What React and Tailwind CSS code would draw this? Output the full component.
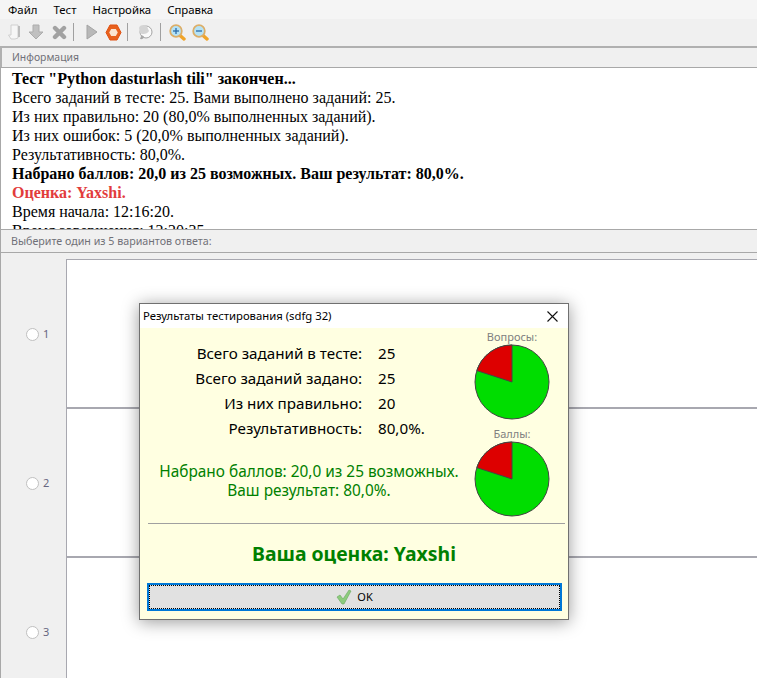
import React from "react";

const sans = "font-['Tahoma','Noto_Sans','DejaVu_Sans',sans-serif]";

function Pie() {
  return (
    <svg width="76" height="76" viewBox="0 0 76 76" className="shrink-0">
      <circle cx="38" cy="38" r="37" fill="#00dd00" stroke="#444" strokeWidth="1" />
      <path d="M38 38 L38 1 A37 37 0 0 0 2.8 26.6 Z" fill="#dd0000" stroke="#444" strokeWidth="1" />
    </svg>
  );
}

function Sep() {
  return <div className="w-px h-[18px] bg-[#a0a0a0] shrink-0" />;
}

function Zoom({ minus }) {
  return (
    <svg width="17" height="17" viewBox="0 0 17 17">
      <path d="M11 11.5 L15 15" stroke="#f0a428" strokeWidth="3.4" strokeLinecap="round" />
      <circle cx="7" cy="7" r="5.8" fill="#b4e2f6" stroke="#dcae68" strokeWidth="1.8" />
      <path d="M4 7 H10" stroke="#2a6aa8" strokeWidth="1.3" />
      {!minus && <path d="M7 4 V10" stroke="#2a6aa8" strokeWidth="1.3" />}
    </svg>
  );
}

function Toolbar() {
  return (
    <div className="h-[26px] flex items-center bg-[#f0f0f0] pl-[7px]">
      {/* disabled door */}
      <svg width="15" height="16" viewBox="0 0 15 16" className="shrink-0">
        <path d="M4 1 H11 V14 L8 15 H4 L1.5 11 H4 Z" fill="#f6f6f6" stroke="#d0d0d0" />
        <path d="M11 2 H13 V13 H11 Z" fill="#bcbcbc" />
      </svg>
      <svg width="16" height="16" viewBox="0 0 16 16" className="ml-[6px] shrink-0">
        <path d="M5 1 H11 V8 H15 L8 15 L1 8 H5 Z" fill="#c0c0c0" stroke="#acacac" />
      </svg>
      <svg width="15" height="15" viewBox="0 0 15 15" className="ml-[8px] shrink-0">
        <path d="M3 3 L12 12 M12 3 L3 12" stroke="#a2a2a2" strokeWidth="4.4" strokeLinecap="round" />
      </svg>
      <div className="ml-[6px]"><Sep /></div>
      <svg width="12" height="16" viewBox="0 0 12 16" className="ml-[12px] shrink-0">
        <path d="M1 1 L11 8 L1 15 Z" fill="#b8b8b8" stroke="#a4a4a4" />
      </svg>
      <svg width="17" height="17" viewBox="0 0 17 17" className="ml-[7px] shrink-0">
        <path d="M5 1 H12 L16 8.5 L12 16 H5 L1 8.5 Z" fill="#e8601c" stroke="#e05010" strokeLinejoin="round" />
        <path d="M6.2 5 H10.8 L12.8 8.5 L10.8 12 H6.2 L4.2 8.5 Z" fill="#fbe4d0" />
      </svg>
      <div className="ml-[5px]"><Sep /></div>
      {/* disabled speech balloon */}
      <svg width="16" height="17" viewBox="0 0 16 17" className="ml-[9px] shrink-0">
        <circle cx="9" cy="8" r="6" fill="#fafafa" stroke="#a4a4a4" />
        <path d="M2 3.5 C4 0.5 8 0.5 10 2.5 L12 7 C10.5 10.5 5 10.5 3 9 Z" fill="#d4d4d4" />
        <path d="M3 15 C5 15.5 7 14.5 7 12.5 L4.5 11 Z" fill="#a8a8a8" />
      </svg>
      <div className="ml-[7px]"><Sep /></div>
      <div className="ml-[8px] shrink-0 flex"><Zoom /></div>
      <div className="ml-[6px] shrink-0 flex"><Zoom minus /></div>
    </div>
  );
}

function AnswerRow({ n, last }) {
  return (
    <div className="flex h-[149px]">
      <div className="w-[65px] flex items-center pl-[25px] pb-[1px] shrink-0">
        <div className="w-[13px] h-[13px] rounded-full bg-white border border-[#c0c0c0]" />
        <span className="ml-[4px] text-[11px] text-[#666680]">{n}</span>
      </div>
      <div className={`flex-1 bg-white border-l border-[#a8a8b0] ${last ? "" : "border-b-2"}`} />
    </div>
  );
}

export default function App() {
  const rows = [
    ["Всего заданий в тесте:", "25"],
    ["Всего заданий задано:", "25"],
    ["Из них правильно:", "20"],
    ["Результативность:", "80,0%."],
  ];

  return (
    <div className={`relative w-[757px] h-[678px] overflow-hidden bg-[#f0f0f0] ${sans}`}>
      <div className="h-[19px] flex items-center gap-[16px] pl-[8px] text-[11.4px] text-black bg-[#f5f5f5]">
        <span>Файл</span>
        <span>Тест</span>
        <span>Настройка</span>
        <span>Справка</span>
      </div>
      <Toolbar />

      <div className="mt-[1px] h-[21px] flex items-center pl-[10px] text-[10.4px] text-[#707078] border-t-2 border-l-2 border-[#b0b0b0]">
        Информация
      </div>
      <div className="h-[162px] overflow-hidden bg-white border-t border-l border-[#a8a8a8] pl-[11px] pt-[1px] font-['Liberation_Serif',serif] text-[16px] leading-[19px] text-black">
        <p className="font-bold">Тест "Python dasturlash tili" закончен...</p>
        <p>Всего заданий в тесте: 25. Вами выполнено заданий: 25.</p>
        <p>Из них правильно: 20 (80,0% выполненных заданий).</p>
        <p>Из них ошибок: 5 (20,0% выполненных заданий).</p>
        <p>Результативность: 80,0%.</p>
        <p className="font-bold">Набрано баллов: 20,0 из 25 возможных. Ваш результат: 80,0%.</p>
        <p className="font-bold text-[#e23c3c]">Оценка: Yaxshi.</p>
        <p>Время начала: 12:16:20.</p>
        <p>Время завершения: 12:20:35.</p>
      </div>

      <div className="h-[23px] flex items-center pl-[10px] pt-[1px] text-[10.7px] text-[#707078] border-t border-l border-[#a8a8a8]">
        Выберите один из 5 вариантов ответа:
      </div>
      <div className="border-t border-l border-[#a8a8a8] pt-[6px] h-[428px]">
        <div className="border-t border-[#a8a8b0] ml-[65px]" />
        <AnswerRow n={1} />
        <AnswerRow n={2} />
        <AnswerRow n={3} last />
      </div>

      {/* results dialog */}
      <div className="absolute left-[139px] top-[303px] w-[430px] h-[317px] flex flex-col border border-[#707070] bg-[#ffffe1] shadow-[0_2px_16px_rgba(0,0,0,0.4)]">
        <div className="h-[24px] shrink-0 bg-white flex items-center justify-between pl-[3px] pr-[10px] text-[11.3px] text-black">
          <span>Результаты тестирования (sdfg 32)</span>
          <svg width="11" height="11" viewBox="0 0 11 11"><path d="M0.5 0.5 L10.5 10.5 M10.5 0.5 L0.5 10.5" stroke="#111" strokeWidth="1.1" /></svg>
        </div>

        <div className="flex flex-1 min-h-0">
          <div className="w-[333px] shrink-0">
            <div className="grid grid-cols-[222px_1fr] gap-x-[16px] mt-[13px] text-[15.2px] leading-[25px] text-black">
              {rows.map(([label, value]) => (
                <React.Fragment key={label}>
                  <span className="text-right">{label}</span>
                  <span>{value}</span>
                </React.Fragment>
              ))}
            </div>
            <div className="mt-[21px] text-center text-[15.4px] leading-[19px] text-[#008000] pl-[5px]">
              <p>Набрано баллов: 20,0 из 25 возможных.</p>
              <p>Ваш результат: 80,0%.</p>
            </div>
          </div>
          <div className="flex flex-col items-center w-[76px] ml-[1px]">
            <span className="mt-[2px] text-[11px] leading-[14px] text-[#808080]">Вопросы:</span>
            <Pie />
            <span className="mt-[7px] text-[11px] leading-[14px] text-[#808080]">Баллы:</span>
            <Pie />
          </div>
        </div>

        <div className="ml-[8px] mr-[3px] border-t border-[#a0a0a0]" />
        <div className="h-[59px] flex items-center justify-center text-[19.4px] font-bold text-[#008000]">
          Ваша оценка: Yaxshi
        </div>
        <button className="ml-[7px] mr-[6px] mb-[8px] h-[28px] flex items-center justify-center gap-[5px] bg-[#e1e1e1] border-2 border-[#0078d7] outline-1 outline-dotted outline-offset-[-3px] outline-black text-[11px] text-black">
          <svg width="16" height="16" viewBox="0 0 16 16">
            <path d="M1 8 L4 6 L7 10 L13 1 L15 2 L8 15 H6 Z" fill="#8ccc7c" stroke="#6aa860" strokeWidth="0.6" />
          </svg>
          OK
        </button>
      </div>
    </div>
  );
}
